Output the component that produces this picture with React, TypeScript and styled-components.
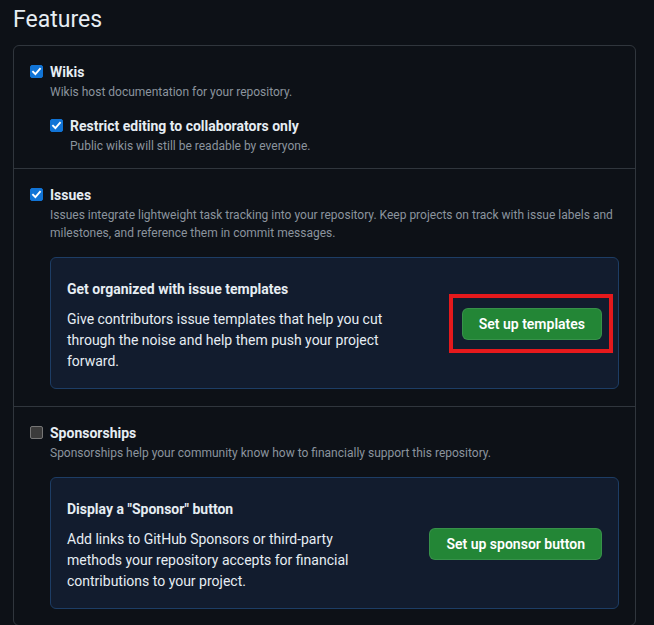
import React from "react";
import styled, { createGlobalStyle } from "styled-components";

const FONT = `Roboto, "Liberation Sans", sans-serif`;

const GlobalStyle = createGlobalStyle`
  html, body {
    margin: 0;
    padding: 0;
    background: #0d1117;
  }
  body {
    font-family: ${FONT};
    color: #e6edf3;
  }
  * {
    box-sizing: border-box;
  }
`;

const Page = styled.div`
  padding: 0 18px 0 13px;
  height: 625px;
  overflow: hidden;
`;

const Heading = styled.h2`
  margin: 0;
  padding-top: 5px;
  font-size: 23px;
  font-weight: 400;
  line-height: 30px;
  height: 45px;
  color: #e6edf3;
`;

const Box = styled.div`
  border: 1px solid #30363d;
  border-radius: 6px;
`;

const Section = styled.div<{ $bottom?: number }>`
  padding: 16px 16px ${(p) => p.$bottom ?? 16}px;
  & + & {
    border-top: 1px solid #30363d;
  }
`;

const CheckRow = styled.div<{ $nested?: boolean }>`
  display: flex;
  gap: 7px;
  margin-left: ${(p) => (p.$nested ? "20px" : "0")};
  margin-top: ${(p) => (p.$nested ? "15px" : "0")};
`;

const Checkbox = styled.span<{ $checked?: boolean }>`
  flex: 0 0 13px;
  width: 13px;
  height: 13px;
  margin-top: 3px;
  border-radius: 2px;
  display: flex;
  align-items: center;
  justify-content: center;
  background: ${(p) => (p.$checked ? "#1174d6" : "#3b3b3b")};
  border: 1px solid ${(p) => (p.$checked ? "#1174d6" : "#767676")};
`;

const CheckText = styled.div`
  flex: 1;
`;

const Label = styled.div`
  font-size: 14px;
  font-weight: 700;
  line-height: 20px;
  color: #e6edf3;
`;

const Note = styled.div`
  margin-top: 1px;
  font-size: 12px;
  line-height: 18px;
  color: #8b949e;
`;

const Promo = styled.div`
  margin: 15px 0 0 20px;
  padding: 21px 16px 16px;
  border: 1px solid #1d3d65;
  border-radius: 6px;
  background: #121c2e;
  display: flex;
  align-items: center;
  justify-content: space-between;
`;

const PromoText = styled.div`
  width: 320px;
`;

const PromoTitle = styled.div`
  font-size: 14px;
  font-weight: 700;
  line-height: 21px;
  margin-bottom: 9px;
`;

const PromoBody = styled.div`
  font-size: 14px;
  line-height: 21px;
`;

const ButtonWrap = styled.div<{ $highlight?: boolean }>`
  position: relative;
  margin-bottom: 4px;
  ${(p) =>
    p.$highlight &&
    `
    &::after {
      content: "";
      position: absolute;
      top: -14px;
      bottom: -13px;
      left: -13px;
      right: -11px;
      border: 4px solid #e5191c;
      pointer-events: none;
    }
  `}
`;

const Button = styled.button`
  display: block;
  height: 32px;
  padding: 0 16px;
  border-radius: 6px;
  border: 1px solid rgba(240, 246, 252, 0.1);
  background: #238636;
  color: #ffffff;
  font-family: ${FONT};
  font-size: 14px;
  font-weight: 600;
  white-space: nowrap;
  cursor: pointer;
`;

const Tick = () => (
  <svg width="11" height="11" viewBox="0 0 12 12">
    <path d="M2.2 6.2 L4.8 8.8 L9.8 3" fill="none" stroke="#fff" strokeWidth="2" strokeLinecap="square" />
  </svg>
);

type CheckProps = {
  checked?: boolean;
  nested?: boolean;
  label: string;
  note: string;
};

const Check = ({ checked, nested, label, note }: CheckProps) => (
  <CheckRow $nested={nested}>
    <Checkbox $checked={checked}>{checked && <Tick />}</Checkbox>
    <CheckText>
      <Label>{label}</Label>
      <Note>{note}</Note>
    </CheckText>
  </CheckRow>
);

const App = () => {
  return (
    <>
      <GlobalStyle />
      <Page>
        <Heading>Features</Heading>
        <Box>
          <Section $bottom={13}>
            <Check checked label="Wikis" note="Wikis host documentation for your repository." />
            <Check
              checked
              nested
              label="Restrict editing to collaborators only"
              note="Public wikis will still be readable by everyone."
            />
          </Section>
          <Section $bottom={17}>
            <Check
              checked
              label="Issues"
              note="Issues integrate lightweight task tracking into your repository. Keep projects on track with issue labels and milestones, and reference them in commit messages."
            />
            <Promo>
              <PromoText>
                <PromoTitle>Get organized with issue templates</PromoTitle>
                <PromoBody>
                  Give contributors issue templates that help you cut through the noise and help them push your project
                  forward.
                </PromoBody>
              </PromoText>
              <ButtonWrap $highlight>
                <Button>Set up templates</Button>
              </ButtonWrap>
            </Promo>
          </Section>
          <Section>
            <Check
              label="Sponsorships"
              note="Sponsorships help your community know how to financially support this repository."
            />
            <Promo>
              <PromoText>
                <PromoTitle>Display a "Sponsor" button</PromoTitle>
                <PromoBody>
                  Add links to GitHub Sponsors or third-party methods your repository accepts for financial
                  contributions to your project.
                </PromoBody>
              </PromoText>
              <ButtonWrap>
                <Button>Set up sponsor button</Button>
              </ButtonWrap>
            </Promo>
          </Section>
        </Box>
      </Page>
    </>
  );
};

export default App;
